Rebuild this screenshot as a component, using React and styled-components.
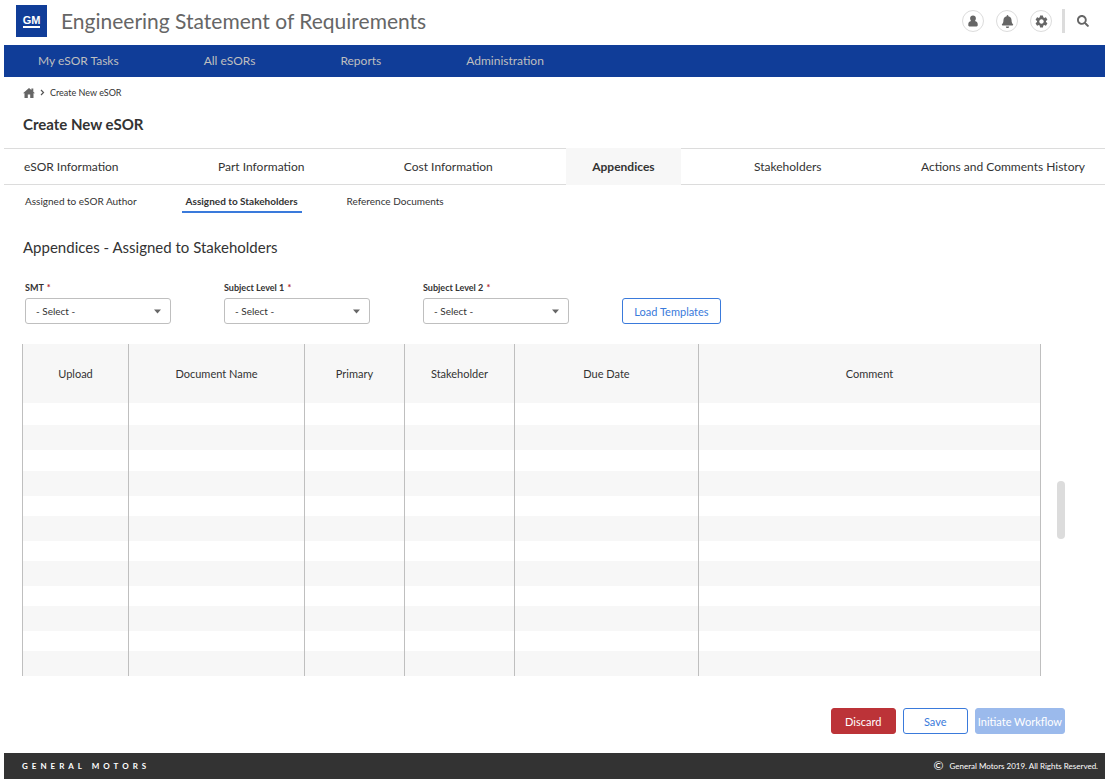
import React, { useState } from 'react';
import styled, { createGlobalStyle } from 'styled-components';
import { FaBell, FaSearch } from 'react-icons/fa';
import { MdSettings } from 'react-icons/md';

const GlobalStyle = createGlobalStyle`
    * {
        box-sizing: border-box;
    }

    body {
        margin: 0;
        background: #fff;
        color: #333;
        font-family: Lato, "Open Sans", sans-serif;
        font-size: 12px;
        line-height: 16px;
    }

    a {
        color: inherit;
        text-decoration: none;
    }

    button, select {
        font-family: inherit;
    }
`;

const Page = styled.div`
    padding: 0 1px 1px 4px;
`;

const Header = styled.header`
    display: flex;
    align-items: center;
    justify-content: space-between;
    height: 45px;
    padding: 0 16px 3px 12px;
`;

const Brand = styled.div`
    display: flex;
    align-items: center;
    gap: 14px;
`;

const Logo = styled.a`
    display: flex;
    align-items: center;
    justify-content: center;
    width: 31px;
    height: 32px;
    background: #103d98;
    color: #fff;
    font-family: "Liberation Sans", sans-serif;
    font-size: 11px;
    font-weight: bold;
    line-height: 12px;

    span {
        border-bottom: 2px solid #fff;
    }
`;

const AppName = styled.div`
    color: #666;
    font-size: 21px;
    line-height: 28px;
`;

const Tools = styled.div`
    display: flex;
    align-items: center;
    gap: 12px;
`;

const RoundButton = styled.button`
    display: flex;
    align-items: center;
    justify-content: center;
    width: 22px;
    height: 22px;
    padding: 0;
    border: 1px solid #dcdcdc;
    border-radius: 50%;
    background: #fff;
    color: #666;
`;

const Divider = styled.div`
    width: 3px;
    height: 24px;
    margin-left: -2px;
    background: #dcdcdc;
`;

const SearchButton = styled.button`
    display: flex;
    padding: 0;
    border: 0;
    background: none;
    color: #666;
`;

const MainNav = styled.nav`
    display: flex;
    align-items: center;
    gap: 85px;
    height: 32px;
    padding: 0 34px;
    background: #103d98;
    color: #bfbfbf;
`;

const Breadcrumb = styled.nav`
    display: flex;
    align-items: center;
    gap: 5px;
    height: 31px;
    padding: 0 19px;
    font-size: 9px;

    a {
        display: flex;
    }
`;

const PageTitle = styled.h1`
    margin: 0;
    padding: 4px 19px 12px;
    font-size: 15px;
    font-weight: bold;
    line-height: 24px;
`;

const Tabs = styled.nav`
    display: flex;
    align-items: stretch;
    justify-content: space-between;
    height: 37px;
    padding: 0 20px;
    border-top: 1px solid #dcdcdc;
    border-bottom: 1px solid #dcdcdc;
`;

// the grey box of the active tab grows into the gaps, so the labels stay evenly spaced
const Tab = styled.a`
    display: flex;
    align-items: center;
    margin: -1px ${props => props.$active ? "-26px" : "0"};
    padding: 0 ${props => props.$active ? "26px" : "0"};
    background: ${props => props.$active ? "#f7f7f7" : "transparent"};
    font-weight: ${props => props.$active ? "bold" : "normal"};
`;

const SubTabs = styled.nav`
    display: flex;
    gap: 41px;
    padding: 8px 17px 0;
    font-size: 10px;
`;

const SubTab = styled.a`
    padding: 0 4px 2px;
    border-bottom: 2px solid ${props => props.$active ? "#3a7adb" : "transparent"};
    font-weight: ${props => props.$active ? "bold" : "normal"};
`;

const SectionTitle = styled.h2`
    margin: 0;
    padding: 22px 19px 21px;
    font-size: 15px;
    font-weight: normal;
    line-height: 24px;
`;

const Filters = styled.form`
    display: flex;
    align-items: flex-end;
    gap: 53px;
    padding: 0 21px;
    margin-bottom: 20px;
`;

const Field = styled.div`
    width: 146px;
`;

const Label = styled.label`
    display: block;
    margin-bottom: 2px;
    font-size: 9px;
    font-weight: bold;
    line-height: 16px;

    span {
        margin-left: 1px;
        color: #b3262b;
    }
`;

const SelectBox = styled.div`
    position: relative;

    svg {
        position: absolute;
        top: 11px;
        right: 10px;
        pointer-events: none;
    }
`;

const Select = styled.select`
    display: block;
    width: 100%;
    height: 26px;
    padding: 0 10px;
    border: 1px solid #bfbfbf;
    border-radius: 3px;
    appearance: none;
    background: #fff;
    color: #333;
    font-size: 10px;
`;

const colors = {
    outline: { bg: "#fff", border: "#3a7adb", text: "#3a7adb" },
    danger: { bg: "#bc3338", border: "#bc3338", text: "#fff" },
    muted: { bg: "#9bbaec", border: "#9bbaec", text: "#fff" },
};

const Button = styled.button`
    height: 26px;
    min-width: ${props => props.$wide ? "99px" : "65px"};
    padding: 0 ${props => props.$tight ? "2px" : "11px"};
    border: 1px solid ${props => colors[props.$kind].border};
    border-radius: 3px;
    background: ${props => colors[props.$kind].bg};
    color: ${props => colors[props.$kind].text};
    font-size: 11px;
`;

const TableArea = styled.div`
    display: flex;
    align-items: center;
    gap: 16px;
    padding: 0 40px 0 18px;
`;

const Table = styled.table`
    flex: 1;
    table-layout: fixed;
    border-collapse: collapse;

    th, td {
        padding: 0;
        border-left: 1px solid #bfbfbf;
        border-right: 1px solid #bfbfbf;
    }

    th {
        height: 59px;
        background: #f7f7f7;
        font-size: 11px;
        font-weight: normal;
    }

    td {
        height: 20px;
    }

    tbody tr:first-child td {
        height: 22px;
    }

    tbody tr:nth-child(3) td {
        height: 21px;
    }

    tbody tr:nth-child(even) td {
        height: 25px;
        background: #f7f7f7;
    }
`;

const ScrollThumb = styled.div`
    width: 8px;
    height: 58px;
    border-radius: 4px;
    background: #dcdcdc;
`;

const Actions = styled.div`
    display: flex;
    justify-content: flex-end;
    gap: 7px;
    padding: 32px 40px 19px;
`;

const Footer = styled.footer`
    display: flex;
    align-items: center;
    justify-content: space-between;
    height: 26px;
    padding: 0 7px 0 18px;
    background: #333;
    color: #fff;
    font-size: 8px;
`;

const Wordmark = styled.div`
    font-weight: bold;
    letter-spacing: 4px;
`;

const Copyright = styled.div`
    display: flex;
    align-items: center;
    gap: 6px;

    span {
        font-size: 12px;
    }
`;


const navItems = ["My eSOR Tasks", "All eSORs", "Reports", "Administration"];

const tabs = [
    "eSOR Information",
    "Part Information",
    "Cost Information",
    "Appendices",
    "Stakeholders",
    "Actions and Comments History",
];

const subTabs = ["Assigned to eSOR Author", "Assigned to Stakeholders", "Reference Documents"];

const filters = [
    { id: "smt", label: "SMT" },
    { id: "level1", label: "Subject Level 1" },
    { id: "level2", label: "Subject Level 2" },
];

// the last column takes what is left
const columns = [
    { name: "Upload", width: 106 },
    { name: "Document Name", width: 176 },
    { name: "Primary", width: 100 },
    { name: "Stakeholder", width: 110 },
    { name: "Due Date", width: 184 },
    { name: "Comment" },
];

const rows = Array.from({ length: 12 }, (_, i) => i);


function UserIcon() {
    return (
        <svg width="10" height="12" viewBox="0 0 10 12" fill="currentColor">
            <path d="M5 0.4c1.8 0 2.9 1.2 2.9 2.9 0 1.1-.4 2-.9 2.6 1.600.4 2.700 1.400 2.700 3.100v1.300c0 .7-.4 1.100-1.100 1.100H1.400c-.7 0-1.100-.4-1.100-1.100V9c0-1.700 1.100-2.700 2.700-3.100-.5-.6-.9-1.500-.9-2.600C2.100 1.600 3.200.4 5 .4z" />
        </svg>
    );
}

function HomeIcon() {
    return (
        <svg width="12" height="10" viewBox="0 0 12 10" fill="#666">
            <path d="M6 0 0 5.300h1.500V10h3.300V6.500h2.400V10h3.300V5.300H12L10.300 3.800V.5H8.400v1.600z" />
        </svg>
    );
}

function Chevron() {
    return (
        <svg width="5" height="7" viewBox="0 0 5 7" fill="none" stroke="#555" strokeWidth="1.200">
            <path d="M1 1l2.500 2.500L1 6" />
        </svg>
    );
}

function Filter({ id, label }) {
    return (
        <Field>
            <Label htmlFor={id}>{label} <span>*</span></Label>
            <SelectBox>
                <Select id={id}>
                    <option>- Select -</option>
                </Select>
                <svg width="7" height="5" viewBox="0 0 7 5" fill="#666">
                    <path d="M0 .5h7L3.500 4.500z" />
                </svg>
            </SelectBox>
        </Field>
    );
}

function App() {

    const [tab, setTab] = useState("Appendices");
    const [subTab, setSubTab] = useState("Assigned to Stakeholders");

    return (
        <Page>
            <GlobalStyle />

            <Header>
                <Brand>
                    <Logo href="#"><span>GM</span></Logo>
                    <AppName>Engineering Statement of Requirements</AppName>
                </Brand>
                <Tools>
                    <RoundButton aria-label="Profile"><UserIcon /></RoundButton>
                    <RoundButton aria-label="Notifications"><FaBell size={13} /></RoundButton>
                    <RoundButton aria-label="Settings"><MdSettings size={15} /></RoundButton>
                    <Divider />
                    <SearchButton aria-label="Search"><FaSearch size={12} /></SearchButton>
                </Tools>
            </Header>

            <MainNav>
                {navItems.map(item => <a key={item} href="#">{item}</a>)}
            </MainNav>

            <Breadcrumb>
                <a href="#" aria-label="Home"><HomeIcon /></a>
                <Chevron />
                <a href="#">Create New eSOR</a>
            </Breadcrumb>

            <PageTitle>Create New eSOR</PageTitle>

            <Tabs>
                {tabs.map(name => (
                    <Tab key={name} href="#" $active={name === tab} onClick={() => setTab(name)}>{name}</Tab>
                ))}
            </Tabs>

            <SubTabs>
                {subTabs.map(name => (
                    <SubTab key={name} href="#" $active={name === subTab} onClick={() => setSubTab(name)}>{name}</SubTab>
                ))}
            </SubTabs>

            <SectionTitle>Appendices - {subTab}</SectionTitle>

            <Filters>
                {filters.map(f => <Filter key={f.id} id={f.id} label={f.label} />)}
                <Button type="button" $kind="outline" $wide>Load Templates</Button>
            </Filters>

            <TableArea>
                <Table>
                    <colgroup>
                        {columns.map(c => <col key={c.name} width={c.width} />)}
                    </colgroup>
                    <thead>
                        <tr>
                            {columns.map(c => <th key={c.name} scope="col">{c.name}</th>)}
                        </tr>
                    </thead>
                    <tbody>
                        {rows.map(row => (
                            <tr key={row}>
                                {columns.map(c => <td key={c.name} />)}
                            </tr>
                        ))}
                    </tbody>
                </Table>
                <ScrollThumb />
            </TableArea>

            <Actions>
                <Button $kind="danger">Discard</Button>
                <Button $kind="outline">Save</Button>
                <Button $kind="muted" $tight>Initiate Workflow</Button>
            </Actions>

            <Footer>
                <Wordmark>GENERAL MOTORS</Wordmark>
                <Copyright><span>©</span> General Motors 2019. All Rights Reserved.</Copyright>
            </Footer>
        </Page>
    );
}


export default App;
